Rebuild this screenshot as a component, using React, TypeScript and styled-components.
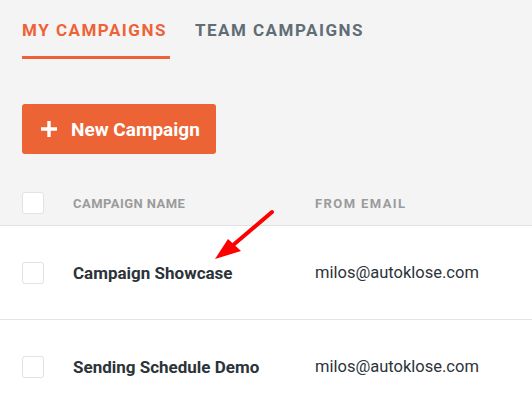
import React from "react";
import styled, { createGlobalStyle } from "styled-components";

const Global = createGlobalStyle`
  html, body { margin: 0; padding: 0; background: #f4f4f4; }
  body { font-family: Roboto, "Liberation Sans", Arial, sans-serif; overflow: hidden; }
  #root { width: 532px; height: 403px; overflow: hidden; }
`;

const Page = styled.div`
  position: relative;
  width: 532px;
  height: 403px;
  background: #f4f4f4;
`;

const Top = styled.div`
  padding: 0 0 0 22px;
`;

const Tabs = styled.div`
  display: flex;
  gap: 25px;
  padding-top: 21px;
`;

const Tab = styled.div<{ $active?: boolean }>`
  font-size: 17px;
  font-weight: 700;
  letter-spacing: 1.5px;
  line-height: 19px;
  color: ${(p) => (p.$active ? "#ed6337" : "#606d74")};
  padding-bottom: 16px;
  border-bottom: 3px solid ${(p) => (p.$active ? "#ed6337" : "transparent")};
  padding-right: ${(p) => (p.$active ? "3px" : "0")};
`;

const NewButton = styled.button`
  margin-top: 45px;
  display: flex;
  align-items: center;
  gap: 13px;
  height: 50px;
  width: 194px;
  padding: 0 0 0 18px;
  border: none;
  border-radius: 3px;
  background: #ec6336;
  color: #fff;
  font-family: Roboto, "Liberation Sans", Arial, sans-serif;
  font-size: 19px;
  font-weight: 700;
`;

const Spacer = styled.div`
  height: 27px;
`;

const Row = styled.div<{ $head?: boolean }>`
  display: grid;
  grid-template-columns: 51px 242px 1fr;
  align-items: center;
  padding-left: 22px;
  height: ${(p) => (p.$head ? "44px" : "93px")};
  background: ${(p) => (p.$head ? "#f4f4f4" : "#fff")};
  border-bottom: 1px solid #e3e3e3;
`;

const Box = styled.div`
  width: 20px;
  height: 20px;
  border: 1px solid #e2e2e2;
  border-radius: 3px;
  background: #fff;
`;

const HeadCell = styled.div<{ $spacing: number }>`
  font-size: 13px;
  font-weight: 700;
  letter-spacing: ${(p) => p.$spacing}px;
  color: #9b9b9b;
`;

const NameCell = styled.div`
  font-size: 17px;
  font-weight: 700;
  color: #2c3339;
`;

const EmailCell = styled.div`
  font-size: 16.5px;
  font-weight: 400;
  color: #2c3339;
`;

const Arrow = styled.svg`
  position: absolute;
  left: 0;
  top: 0;
  pointer-events: none;
`;

const rows = [
  { name: "Campaign Showcase", email: "milos@autoklose.com" },
  { name: "Sending Schedule Demo", email: "milos@autoklose.com" },
];

export default function App() {
  return (
    <Page>
      <Global />
      <Top>
        <Tabs>
          <Tab $active>MY CAMPAIGNS</Tab>
          <Tab>TEAM CAMPAIGNS</Tab>
        </Tabs>
        <NewButton>
          <svg width="18" height="18" viewBox="0 0 18 18">
            <path d="M9 1v16M1 9h16" stroke="#fff" strokeWidth="3.4" />
          </svg>
          New Campaign
        </NewButton>
      </Top>
      <Spacer />
      <Row $head>
        <Box />
        <HeadCell $spacing={0.45}>CAMPAIGN NAME</HeadCell>
        <HeadCell $spacing={1.4}>FROM EMAIL</HeadCell>
      </Row>
      {rows.map((r) => (
        <Row key={r.name}>
          <Box />
          <NameCell>{r.name}</NameCell>
          <EmailCell>{r.email}</EmailCell>
        </Row>
      ))}
      <Arrow width="532" height="403" viewBox="0 0 532 403">
        <path d="M272 212 L232 246" stroke="#f00" strokeWidth="4" strokeLinecap="round" />
        <path d="M215 259 L228 239 L241 251 Z" fill="#f00" />
      </Arrow>
    </Page>
  );
}
